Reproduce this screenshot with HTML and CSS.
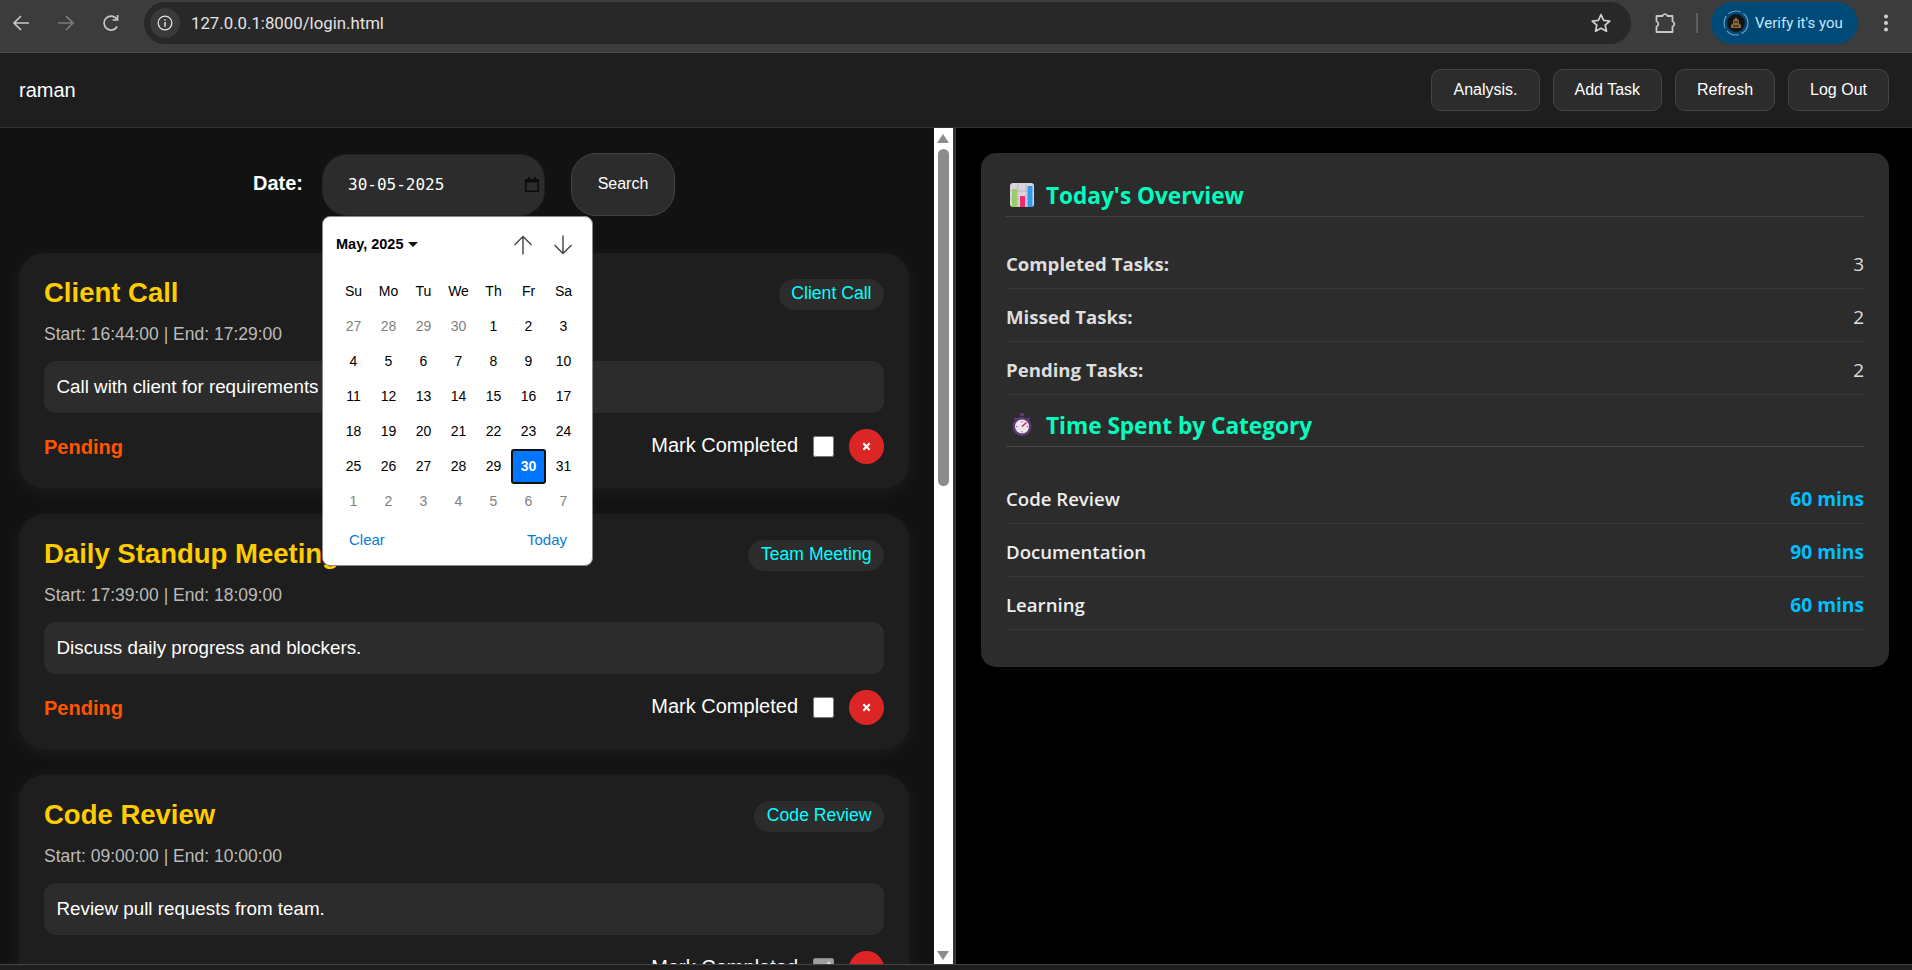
FILE: index.html
```html
<!DOCTYPE html>
<html lang="en">
<head>
<meta charset="utf-8">
<title>Task Tracker</title>
<link rel="stylesheet" href="styles.css">
</head>
<body>
<div class="toolbar">
  <svg class="tb-icon" viewBox="0 0 24 24"><path d="M20 12H5M12 5l-7 7 7 7" fill="none" stroke="#c7c7c7" stroke-width="1.7"/></svg>
  <svg class="tb-icon" viewBox="0 0 24 24"><path d="M4 12h15M12 5l7 7-7 7" fill="none" stroke="#7b7b7b" stroke-width="1.7"/></svg>
  <svg class="tb-icon" viewBox="0 0 24 24"><path d="M18.2 15.5a7 7 0 1 1-.2-7.2M18.6 4v5h-5" fill="none" stroke="#c7c7c7" stroke-width="1.7"/></svg>
  <div class="omnibox">
    <span class="info-chip">
      <svg viewBox="0 0 20 20" width="18" height="18"><circle cx="10" cy="10" r="7.6" fill="none" stroke="#e3e3e3" stroke-width="1.4"/><path d="M10 9v5.2M10 5.8v1.6" stroke="#e3e3e3" stroke-width="1.6"/></svg>
    </span>
    <span class="url">127.0.0.1:8000/login.html</span>
    <svg class="star" viewBox="0 0 24 24"><path d="M12 3.6l2.6 5.7 6.2.7-4.6 4.2 1.3 6.1-5.5-3.1-5.5 3.1 1.3-6.1L3.2 10l6.2-.7z" fill="none" stroke="#d0d0d0" stroke-width="1.7" stroke-linejoin="round"/></svg>
  </div>
  <svg class="tb-icon puzzle" viewBox="0 0 24 24"><path d="M3.500 5h6a2.600 2.600 0 0 1 5 0h5v5.500a2.600 2.600 0 0 1 0 5V21h-16v-5.500a2.600 2.600 0 0 0 0-5z" fill="none" stroke="#c7c7c7" stroke-width="1.8" stroke-linejoin="round"/></svg>
  <span class="tb-sep"></span>
  <div class="profile">
    <svg class="avatar" viewBox="0 0 26 26"><circle cx="13" cy="13" r="12" fill="none" stroke="#6f9ab8" stroke-width="1.2" stroke-dasharray="13 3"/><circle cx="13" cy="13" r="9" fill="#141414"/><path d="M8 18v-3l2-1.500v-3l3-3 3 3v3l2 1.500v3z" fill="#8a6a3c"/><path d="M11 12h4M10 16h6" stroke="#141414" stroke-width="1"/></svg>
    <span>Verify it's you</span>
  </div>
  <svg class="tb-icon dots" viewBox="0 0 24 24"><circle cx="12" cy="5.500" r="2" fill="#d0d0d0"/><circle cx="12" cy="12" r="2" fill="#d0d0d0"/><circle cx="12" cy="18.500" r="2" fill="#d0d0d0"/></svg>
</div>

<header class="topbar">
  <div class="username">raman</div>
  <nav class="actions">
    <button class="btn">Analysis.</button>
    <button class="btn">Add Task</button>
    <button class="btn">Refresh</button>
    <button class="btn">Log Out</button>
  </nav>
</header>

<main class="main">
  <section class="left">
    <div class="date-row">
      <label class="date-label">Date:</label>
      <div class="date-input">
        <span class="date-value">30-05-2025</span>
        <svg class="cal-icon" viewBox="0 0 14 15"><path d="M0 2h14v13H0z" fill="#0c0c0c"/><path d="M3 0h2v2H3zM9 0h2v2H9z" fill="#0c0c0c"/><path d="M1.500 5.500h11v8h-11z" fill="#2c2c2c"/></svg>
      </div>
      <button class="search">Search</button>
    </div>

    <article class="card">
      <div class="card-head"><h3 class="card-title">Client Call</h3><span class="tag">Client Call</span></div>
      <p class="time">Start: 16:44:00 | End: 17:29:00</p>
      <p class="desc">Call with client for requirements</p>
      <div class="card-foot">
        <span class="status">Pending</span>
        <div class="card-controls">
          <span class="mark">Mark Completed</span><input class="check" type="checkbox">
          <button class="del"><svg viewBox="0 0 10 10" width="9" height="9"><path d="M1.500 1.500l7 7M8.500 1.500l-7 7" stroke="#fff" stroke-width="2.400"/></svg></button>
        </div>
      </div>
    </article>

    <article class="card">
      <div class="card-head"><h3 class="card-title">Daily Standup Meeting</h3><span class="tag">Team Meeting</span></div>
      <p class="time">Start: 17:39:00 | End: 18:09:00</p>
      <p class="desc">Discuss daily progress and blockers.</p>
      <div class="card-foot">
        <span class="status">Pending</span>
        <div class="card-controls">
          <span class="mark">Mark Completed</span><input class="check" type="checkbox">
          <button class="del"><svg viewBox="0 0 10 10" width="9" height="9"><path d="M1.500 1.500l7 7M8.500 1.500l-7 7" stroke="#fff" stroke-width="2.400"/></svg></button>
        </div>
      </div>
    </article>

    <article class="card">
      <div class="card-head"><h3 class="card-title">Code Review</h3><span class="tag">Code Review</span></div>
      <p class="time">Start: 09:00:00 | End: 10:00:00</p>
      <p class="desc">Review pull requests from team.</p>
      <div class="card-foot">
        <span class="status"></span>
        <div class="card-controls">
          <span class="mark">Mark Completed</span><input class="check" type="checkbox" checked disabled>
          <button class="del"><svg viewBox="0 0 10 10" width="9" height="9"><path d="M1.500 1.500l7 7M8.500 1.500l-7 7" stroke="#fff" stroke-width="2.400"/></svg></button>
        </div>
      </div>
    </article>

    <div class="picker">
      <div class="picker-head">
        <span class="picker-month">May, 2025 <i class="caret"></i></span>
        <span class="picker-nav">
          <svg viewBox="0 0 20 20" width="20" height="20"><path d="M10 19.500V1.500M1.500 10L10 1.500l8.500 8.500" fill="none" stroke="#444" stroke-width="1.400"/></svg>
          <svg viewBox="0 0 20 20" width="20" height="20"><path d="M10 .5v18M1.500 10l8.500 8.500 8.500-8.500" fill="none" stroke="#444" stroke-width="1.400"/></svg>
        </span>
      </div>
      <div class="picker-grid">
        <span>Su</span><span>Mo</span><span>Tu</span><span>We</span><span>Th</span><span>Fr</span><span>Sa</span>
        <span class="out">27</span><span class="out">28</span><span class="out">29</span><span class="out">30</span><span>1</span><span>2</span><span>3</span>
        <span>4</span><span>5</span><span>6</span><span>7</span><span>8</span><span>9</span><span>10</span>
        <span>11</span><span>12</span><span>13</span><span>14</span><span>15</span><span>16</span><span>17</span>
        <span>18</span><span>19</span><span>20</span><span>21</span><span>22</span><span>23</span><span>24</span>
        <span>25</span><span>26</span><span>27</span><span>28</span><span>29</span><span class="sel">30</span><span>31</span>
        <span class="out">1</span><span class="out">2</span><span class="out">3</span><span class="out">4</span><span class="out">5</span><span class="out">6</span><span class="out">7</span>
      </div>
      <div class="picker-foot"><span>Clear</span><span>Today</span></div>
    </div>
  </section>

  <div class="scrollbar">
    <i class="sb-up"></i>
    <i class="sb-thumb"></i>
    <i class="sb-down"></i>
  </div>

  <section class="right">
    <div class="panel">
      <h2 class="panel-title">
        <svg class="emoji" viewBox="0 0 24 24"><rect x="0" y="0" width="24" height="24" rx="3" fill="#d9d4de"/><path d="M0 8h24M0 16h24M8 0v24M16 0v24" stroke="#b9b4c0" stroke-width=".8"/><rect x="2" y="6" width="5" height="18" fill="#9ccc65"/><rect x="10" y="13" width="5" height="11" fill="#ec2f6c"/><rect x="17.500" y="3" width="5" height="21" fill="#2f9bef"/></svg>
        Today's Overview
      </h2>
      <div class="rows">
        <div class="row"><span class="row-label">Completed Tasks:</span><span class="row-value">3</span></div>
        <div class="row"><span class="row-label">Missed Tasks:</span><span class="row-value">2</span></div>
        <div class="row"><span class="row-label">Pending Tasks:</span><span class="row-value">2</span></div>
      </div>
      <h2 class="panel-title second">
        <svg class="emoji" viewBox="0 0 24 24"><rect x="10" y="0" width="4" height="3" fill="#5e3a78"/><circle cx="12" cy="13.500" r="9.500" fill="#5e3a78"/><circle cx="12" cy="13.500" r="7" fill="#ece8ef"/><path d="M12 13.500l4.500-4" stroke="#e0245e" stroke-width="1.600"/><path d="M12 8v1.500M12 18v1.500M6 13.500h1.500M16.500 13.500H18" stroke="#6b6b7a" stroke-width="1"/><path d="M4.500 5l2 2M19.500 5l-2 2" stroke="#5e3a78" stroke-width="2"/></svg>
        Time Spent by Category
      </h2>
      <div class="rows cats">
        <div class="row"><span class="row-label light">Code Review</span><span class="row-mins">60 mins</span></div>
        <div class="row"><span class="row-label light">Documentation</span><span class="row-mins">90 mins</span></div>
        <div class="row"><span class="row-label light">Learning</span><span class="row-mins">60 mins</span></div>
      </div>
    </div>
  </section>
</main>
<div class="bottom-strip"></div>
</body>
</html>
```
FILE: styles.css
```css
* { box-sizing: border-box; }
html, body { margin: 0; height: 970px; overflow: hidden; }
body {
  display: flex;
  flex-direction: column;
  background: #000;
  color: #fff;
  font-family: "Liberation Sans", Arial, sans-serif;
}

/* browser toolbar */
.toolbar {
  height: 53px;
  flex: none;
  display: flex;
  align-items: center;
  padding: 2px 14px 9px 9px;
  background: #3c3c3c;
  border-bottom: 1px solid #4a4a4a;
}
.tb-icon { width: 24px; height: 24px; flex: none; margin-right: 21px; }
.omnibox {
  flex: 1;
  height: 42px;
  display: flex;
  align-items: center;
  padding: 0 18px 0 6px;
  background: #282828;
  border-radius: 21px;
}
.info-chip {
  width: 30px;
  height: 30px;
  display: flex;
  align-items: center;
  justify-content: center;
  border-radius: 50%;
  background: #3a3a3a;
}
.url {
  flex: 1;
  margin-left: 11px;
  padding-top: 1px;
  font: 16.800px "Roboto", sans-serif;
  color: #e3e3e3;
}
.star { width: 24px; height: 24px; }
.tb-icon.puzzle { margin: 0 19px 0 22px; }
.tb-sep { width: 2px; height: 20px; background: #5e5e5e; flex: none; }
.profile {
  flex: none;
  width: 147px;
  height: 42px;
  margin-left: 13px;
  display: flex;
  align-items: center;
  gap: 6px;
  padding-left: 12px;
  border-radius: 21px;
  background: #004a77;
  color: #c2e7ff;
  font: 15px "Roboto", sans-serif;
}
.avatar { width: 26px; height: 26px; }
.tb-icon.dots { margin: 0 0 0 16px; }

/* app header */
.topbar {
  height: 75px;
  flex: none;
  display: flex;
  align-items: center;
  justify-content: space-between;
  padding: 0 23px 0 19px;
  background: #1e1e1e;
  border-bottom: 1px solid #333;
}
.username { font-size: 20px; }
.actions { display: flex; gap: 13px; }
.btn {
  height: 42px;
  padding: 0 21px;
  background: #2c2c2c;
  border: 1px solid #444;
  border-radius: 10px;
  color: #fff;
  font: 16px "Liberation Sans", Arial, sans-serif;
}

/* main */
.main { flex: 1; min-height: 0; display: flex; }
.left {
  position: relative;
  width: 934px;
  flex: none;
  padding: 25px 25px 0 19px;
  background: #121212;
  overflow: hidden;
}
.date-row {
  display: flex;
  align-items: center;
  height: 63px;
  margin-bottom: 37px;
  padding-left: 234px;
}
.date-label { width: 69px; padding-bottom: 2px; font-size: 20px; font-weight: 700; }
.date-input {
  width: 223px;
  height: 62px;
  display: flex;
  align-items: center;
  justify-content: space-between;
  padding: 0 5px 0 25px;
  background: #2c2c2c;
  border: 1px solid #222;
  border-radius: 25px;
}
.date-value { font: 16px "DejaVu Sans Mono", monospace; color: #fff; }
.cal-icon { width: 14px; height: 15px; }
.search {
  width: 104px;
  height: 63px;
  margin-left: 26px;
  padding-bottom: 3px;
  background: #2c2c2c;
  border: 1px solid #444;
  border-radius: 25px;
  color: #fff;
  font: 16px "Liberation Sans", Arial, sans-serif;
}

/* cards */
.card {
  height: 235px;
  margin-bottom: 26px;
  padding: 25px;
  background: #1e1e1e;
  border-radius: 25px;
  box-shadow: 0 4px 20px rgba(255, 255, 255, .05);
}
.card-head { display: flex; align-items: center; justify-content: space-between; height: 33px; }
.card-title { margin: 0 0 3px; font-size: 27.500px; font-weight: 700; color: #ffcc00; }
.tag {
  padding: 0 12.500px;
  height: 31px;
  line-height: 29px;
  border-radius: 16px;
  background: #2c2c2c;
  color: #00ffff;
  font-size: 17.600px;
}
.time { margin: 14px 0 0; font-size: 17.500px; line-height: 18px; padding-bottom: 2px; color: #bbb; }
.desc {
  margin: 16px 0 0;
  height: 52px;
  padding: 0 12.500px;
  line-height: 52px;
  background: #2c2c2c;
  border-radius: 12px;
  font-size: 18.800px;
  color: #fff;
}
.card-foot { display: flex; align-items: center; justify-content: space-between; margin-top: 16px; height: 35px; }
.status { padding-top: 2px; font-size: 20px; font-weight: 700; color: #ff5500; }
.card-controls { display: flex; align-items: center; }
.mark { padding-bottom: 2px; font-size: 20px; color: #fff; }
.check { width: 21px; height: 21px; margin: 0 15px 0 15px; accent-color: #8f8f8f; }
.del {
  width: 35px;
  height: 35px;
  padding: 0;
  display: flex;
  align-items: center;
  justify-content: center;
  background: #dc2626;
  border: 0;
  border-radius: 50%;
}

/* date picker popup */
.picker {
  position: absolute;
  left: 322px;
  top: 88px;
  width: 271px;
  height: 350px;
  padding: 0 13px;
  background: #fff;
  border: 1px solid #8a8a8a;
  border-radius: 8px;
  color: #000;
}
.picker-head {
  display: flex;
  align-items: center;
  justify-content: space-between;
  height: 49px;
  padding-top: 4px;
}
.picker-month { font-size: 14.500px; font-weight: 700; }
.caret {
  display: inline-block;
  width: 0;
  height: 0;
  margin: 0 0 2px 1px;
  border: 5px solid transparent;
  border-top: 5px solid #111;
  border-bottom: 0;
}
.picker-nav { display: flex; gap: 20px; height: 20px; margin-right: 6px; margin-top: 3px; }
.picker-grid {
  display: grid;
  grid-template-columns: repeat(7, 35px);
  grid-auto-rows: 35px;
  margin: 8px 0 0;
  font-size: 14px;
  text-align: center;
  line-height: 35px;
}
.picker-grid .out { color: #808080; }
.picker-grid .sel {
  background: #0075ff;
  color: #fff;
  font-weight: 700;
  border: 2px solid #101010;
  border-radius: 3px;
  line-height: 31px;
}
.picker-foot {
  display: flex;
  justify-content: space-between;
  padding: 0 12px 0 13px;
  margin-top: 12px;
  font-size: 15px;
  color: #0b7ad6;
}

/* fake scrollbar */
.scrollbar {
  position: relative;
  width: 19px;
  flex: none;
  background: #fff;
}
.sb-thumb {
  position: absolute;
  left: 4px;
  top: 21px;
  width: 11px;
  height: 337px;
  background: #8c8c8c;
  border-radius: 6px;
}
.sb-up, .sb-down {
  position: absolute;
  left: 3px;
  width: 0;
  height: 0;
  border-left: 6px solid transparent;
  border-right: 6px solid transparent;
}
.sb-up { top: 6px; border-bottom: 9px solid #8c8c8c; }
.sb-down { bottom: 4px; border-top: 9px solid #8c8c8c; }

/* right side */
.right {
  flex: 1;
  padding: 25px 23px 0 25px;
  background: #000;
  border-left: 3px solid #333;
}
.panel {
  height: 514px;
  padding: 25px;
  background: #2c2c2c;
  border-radius: 15px;
  font-family: "Open Sans", "Noto Sans", sans-serif;
}
.panel-title {
  display: flex;
  align-items: center;
  gap: 12px;
  height: 39px;
  margin: 0;
  padding: 0 0 4px 4px;
  font-size: 22.600px;
  font-weight: 700;
  color: #00ffbf;
  border-bottom: 1px solid #444;
}
.panel-title.second { margin-top: 13px; }
.emoji { width: 24px; height: 24px; flex: none; }
.rows { margin-top: 19px; }
.rows.cats { margin-top: 24px; }
.row {
  display: flex;
  justify-content: space-between;
  align-items: center;
  height: 53px;
  padding-top: 3px;
  border-bottom: 1px solid #383838;
  font-size: 18.600px;
}
.row-label { font-weight: 700; color: #ddd; }
.row-label.light { font-weight: 600; color: #eee; }
.row-value { font-size: 19px; color: #ddd; }
.row-mins { font-size: 19.200px; font-weight: 700; color: #00bfff; }

.bottom-strip {
  height: 6px;
  flex: none;
  background: #1e1e1e;
  border-top: 1px solid #444;
}
```
